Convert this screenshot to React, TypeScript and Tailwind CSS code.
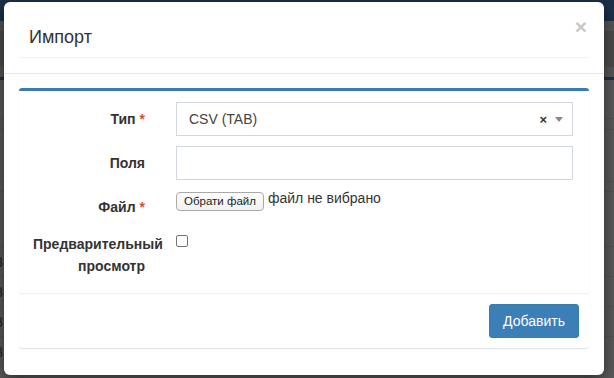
import React from "react";

const font = { fontFamily: '"Liberation Sans", Arial, sans-serif' };

function FormRow({
    label,
    required,
    children,
    className = "",
}: {
    label: React.ReactNode;
    required?: boolean;
    children: React.ReactNode;
    className?: string;
}) {
    return (
        <div className={`flex items-start ${className}`}>
            <div className="ml-[14px] w-[112px] pt-[7px] text-right text-[14px] font-bold leading-[20px] text-[#333]">
                {label}
                {required && <span className="ml-[4px] text-[#dd4b39]">*</span>}
            </div>
            <div className="ml-[31px] w-[397px]">{children}</div>
        </div>
    );
}

export default function App() {
    return (
        <div className="relative h-[378px] w-[614px] overflow-hidden bg-[#5a5a5a]" style={font}>
            {/* page behind the backdrop */}
            <div className="flex flex-col">
                <div className="h-[21px] bg-[#1b3048]" />
                <div className="h-[10px] bg-[#555]" />
                <div className="h-[36px] bg-[#4a4a4a]" />
                <div className="h-[10px] bg-[#555]" />
                <div className="h-[3px] bg-[#1b3048]" />
                <div className="h-[39px] border-b border-[#535353]" />
                <div className="h-[11px] border-b border-[#535353]" />
                <div className="h-[52px] border-b border-[#535353]" />
                <div className="h-[10px] border-b border-[#535353]" />
                <div className="h-[55px] border-b border-[#535353]" />
                <div className="h-[30px] border-b border-[#535353] text-[14px] leading-[30px] text-[#222]">
                    <span className="ml-[-5px]">3</span>
                </div>
                <div className="h-[30px] border-b border-[#535353] text-[14px] leading-[30px] text-[#222]">
                    <span className="ml-[-5px]">8</span>
                </div>
                <div className="h-[30px] border-b border-[#535353] text-[14px] leading-[30px] text-[#222]">
                    <span className="ml-[-5px]">8</span>
                </div>
                <div className="h-[30px] text-[14px] leading-[30px] text-[#222]">
                    <span className="ml-[-5px]">8</span>
                </div>
            </div>

            {/* modal */}
            <div className="absolute left-[4px] top-[2px] flex h-[373px] w-[600px] flex-col rounded-[6px] bg-white shadow-[0_5px_15px_rgba(0,0,0,0.5)]">
                <div className="border-b border-[#e9e9e9] px-[15px] pb-[15px] pt-[22px]">
                    <div className="flex items-start justify-between border-b border-[#f0f0f0] pb-[7px] pl-[10px] pr-[2px]">
                        <h4 className="text-[18px] leading-[26px] text-[#333]">Импорт</h4>
                        <button className="mt-[-8px] text-[21px] font-bold leading-[21px] text-[#c8c8c8]">×</button>
                    </div>
                </div>

                <div className="px-[15px] pt-[14px]">
                    <div className="rounded-[3px] border-t-[3px] border-[#3b7bb5] bg-white shadow-[0_1px_1px_rgba(0,0,0,0.12)]">
                        <div className="pb-[16px] pt-[11px]">
                            <FormRow label="Тип" required className="mb-[10px]">
                                <div className="flex h-[34px] items-center border border-[#d2d6de] pl-[12px] pr-[9px] text-[14px] text-[#444]">
                                    <span className="flex-1">CSV (TAB)</span>
                                    <span className="mr-[8px] text-[13px] font-bold leading-none text-[#333]">×</span>
                                    <span className="h-0 w-0 border-x-[4px] border-t-[5px] border-x-transparent border-t-[#888]" />
                                </div>
                            </FormRow>
                            <FormRow label="Поля" className="mb-[10px]">
                                <div className="h-[34px] border border-[#d2d6de]" />
                            </FormRow>
                            <FormRow label="Файл" required className="mb-[10px]">
                                <div className="flex items-start">
                                    <button className="mt-[2px] h-[19px] rounded-[4px] border border-[#a9a9a9] bg-gradient-to-b from-white to-[#f0f0f0] px-[7px] text-[11.5px] leading-[17px] text-[#222]">
                                        Обрати файл
                                    </button>
                                    <span className="ml-[4px] mt-[-2px] text-[14px] leading-[20px] text-[#333]">файл не вибрано</span>
                                </div>
                            </FormRow>
                            <div className="flex items-start">
                                <div className="ml-[14px] w-[112px] whitespace-normal pt-[6px] text-right text-[14px] font-bold leading-[22px] text-[#333]">
                                    Предварительный просмотр
                                </div>
                                <div className="ml-[31px] pt-[8px]">
                                    <span className="block h-[12px] w-[12px] rounded-[2px] border border-[#767676] bg-white" />
                                </div>
                            </div>
                        </div>
                        <div className="flex justify-end border-t border-[#f0f0f0] p-[10px]">
                            <button className="h-[34px] w-[90px] rounded-[3px] border border-[#367fa9] bg-[#3c7eb6] text-[14px] text-white">
                                Добавить
                            </button>
                        </div>
                    </div>
                </div>
            </div>
        </div>
    );
}
